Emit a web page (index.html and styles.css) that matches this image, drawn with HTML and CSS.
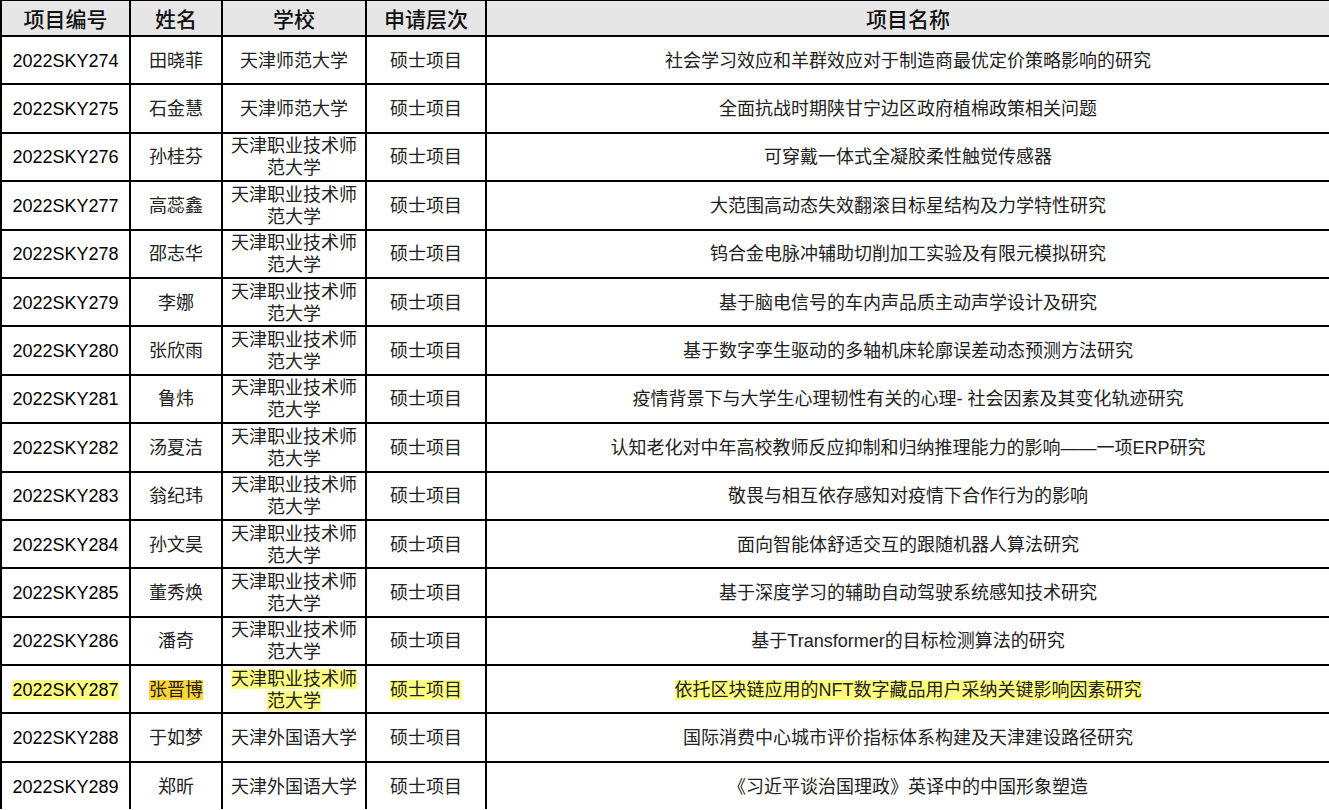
FILE: index.html
```html
<!DOCTYPE html>
<html lang="zh-CN">
<head>
<meta charset="utf-8">
<title>项目列表</title>
<link rel="stylesheet" href="styles.css">
</head>
<body>
<div class="sheet">
  <div class="hd">项目编号</div><div class="hd">姓名</div><div class="hd">学校</div><div class="hd">申请层次</div><div class="hd">项目名称</div>

  <div class="c id">2022SKY274</div><div class="c">田晓菲</div><div class="c">天津师范大学</div><div class="c">硕士项目</div><div class="c">社会学习效应和羊群效应对于制造商最优定价策略影响的研究</div>
  <div class="c id">2022SKY275</div><div class="c">石金慧</div><div class="c">天津师范大学</div><div class="c">硕士项目</div><div class="c">全面抗战时期陕甘宁边区政府植棉政策相关问题</div>
  <div class="c id">2022SKY276</div><div class="c">孙桂芬</div><div class="c">天津职业技术师范大学</div><div class="c">硕士项目</div><div class="c">可穿戴一体式全凝胶柔性触觉传感器</div>
  <div class="c id">2022SKY277</div><div class="c">高蕊鑫</div><div class="c">天津职业技术师范大学</div><div class="c">硕士项目</div><div class="c">大范围高动态失效翻滚目标星结构及力学特性研究</div>
  <div class="c id">2022SKY278</div><div class="c">邵志华</div><div class="c">天津职业技术师范大学</div><div class="c">硕士项目</div><div class="c">钨合金电脉冲辅助切削加工实验及有限元模拟研究</div>
  <div class="c id">2022SKY279</div><div class="c">李娜</div><div class="c">天津职业技术师范大学</div><div class="c">硕士项目</div><div class="c">基于脑电信号的车内声品质主动声学设计及研究</div>
  <div class="c id">2022SKY280</div><div class="c">张欣雨</div><div class="c">天津职业技术师范大学</div><div class="c">硕士项目</div><div class="c">基于数字孪生驱动的多轴机床轮廓误差动态预测方法研究</div>
  <div class="c id">2022SKY281</div><div class="c">鲁炜</div><div class="c">天津职业技术师范大学</div><div class="c">硕士项目</div><div class="c">疫情背景下与大学生心理韧性有关的心理- 社会因素及其变化轨迹研究</div>
  <div class="c id">2022SKY282</div><div class="c">汤夏洁</div><div class="c">天津职业技术师范大学</div><div class="c">硕士项目</div><div class="c">认知老化对中年高校教师反应抑制和归纳推理能力的影响——一项ERP研究</div>
  <div class="c id">2022SKY283</div><div class="c">翁纪玮</div><div class="c">天津职业技术师范大学</div><div class="c">硕士项目</div><div class="c">敬畏与相互依存感知对疫情下合作行为的影响</div>
  <div class="c id">2022SKY284</div><div class="c">孙文昊</div><div class="c">天津职业技术师范大学</div><div class="c">硕士项目</div><div class="c">面向智能体舒适交互的跟随机器人算法研究</div>
  <div class="c id">2022SKY285</div><div class="c">董秀焕</div><div class="c">天津职业技术师范大学</div><div class="c">硕士项目</div><div class="c">基于深度学习的辅助自动驾驶系统感知技术研究</div>
  <div class="c id">2022SKY286</div><div class="c">潘奇</div><div class="c">天津职业技术师范大学</div><div class="c">硕士项目</div><div class="c">基于Transformer的目标检测算法的研究</div>
  <div class="c id"><div><span class="hl">2022SKY287</span></div></div><div class="c"><div><span class="hl2">张晋博</span></div></div><div class="c"><div><span class="hl">天津职业技术师范大学</span></div></div><div class="c"><div><span class="hl">硕士项目</span></div></div><div class="c"><div><span class="hl">依托区块链应用的NFT数字藏品用户采纳关键影响因素研究</span></div></div>
  <div class="c id">2022SKY288</div><div class="c">于如梦</div><div class="c">天津外国语大学</div><div class="c">硕士项目</div><div class="c">国际消费中心城市评价指标体系构建及天津建设路径研究</div>
  <div class="c id">2022SKY289</div><div class="c">郑昕</div><div class="c">天津外国语大学</div><div class="c">硕士项目</div><div class="c">《习近平谈治国理政》英译中的中国形象塑造</div>
</div>
</body>
</html>
```

FILE: styles.css
```css
html, body {
  margin: 0;
  padding: 0;
  background: #ffffff;
  overflow: hidden;
}
.sheet {
  width: 1331px;
  box-sizing: border-box;
  display: grid;
  grid-template-columns: 127px 90px 142px 118px 1fr;
  grid-template-rows: 34px repeat(16, 46.4px);
  gap: 2px;
  padding: 1px 2px 0 2px;
  background: #000000;
  font-family: "Liberation Sans", "Noto Sans CJK SC", sans-serif;
}
.hd {
  background: #e6e6e6;
  display: flex;
  align-items: center;
  justify-content: center;
  font-size: 21px;
  font-weight: 500;
  color: #111111;
  font-family: "Noto Sans CJK SC", sans-serif;
  line-height: 1;
}
.c {
  background: #ffffff;
  display: flex;
  align-items: center;
  justify-content: center;
  text-align: center;
  font-size: 18px;
  line-height: 22px;
  color: #222222;
  padding-top: 1px;
}
.id {
  color: #000000;
}
.hl {
  background: #ffff80;
}
.hl2 {
  background: #ffd633;
}
```
